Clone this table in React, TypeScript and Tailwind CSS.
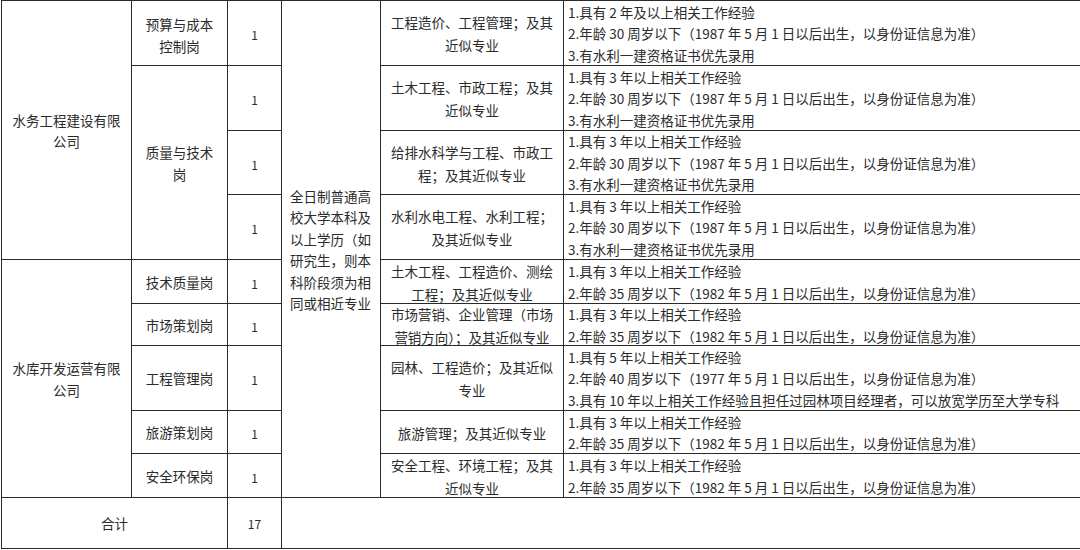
import React from "react";

const age30 = "2.年龄 30 周岁以下（1987 年 5 月 1 日以后出生，以身份证信息为准）";
const age35 = "2.年龄 35 周岁以下（1982 年 5 月 1 日以后出生，以身份证信息为准）";
const cert = "3.有水利一建资格证书优先录用";

const details = [
  {
    row: "row-start-1",
    major: ["工程造价、工程管理；及其", "近似专业"],
    reqs: ["1.具有 2 年及以上相关工作经验", age30, cert],
  },
  {
    row: "row-start-2",
    major: ["土木工程、市政工程；及其", "近似专业"],
    reqs: ["1.具有 3 年以上相关工作经验", age30, cert],
  },
  {
    row: "row-start-3",
    major: ["给排水科学与工程、市政工", "程；及其近似专业"],
    reqs: ["1.具有 3 年以上相关工作经验", age30, cert],
  },
  {
    row: "row-start-4",
    major: ["水利水电工程、水利工程；", "及其近似专业"],
    reqs: ["1.具有 3 年以上相关工作经验", age30, cert],
  },
  {
    row: "row-start-5",
    major: ["土木工程、工程造价、测绘", "工程；及其近似专业"],
    reqs: ["1.具有 3 年以上相关工作经验", age35],
  },
  {
    row: "row-start-6",
    major: ["市场营销、企业管理（市场", "营销方向）；及其近似专业"],
    reqs: ["1.具有 3 年以上相关工作经验", age35],
  },
  {
    row: "row-start-7",
    major: ["园林、工程造价；及其近似", "专业"],
    reqs: [
      "1.具有 5 年以上相关工作经验",
      "2.年龄 40 周岁以下（1977 年 5 月 1 日以后出生，以身份证信息为准）",
      "3.具有 10 年以上相关工作经验且担任过园林项目经理者，可以放宽学历至大学专科",
    ],
  },
  {
    row: "row-start-8",
    major: ["旅游管理；及其近似专业"],
    reqs: ["1.具有 3 年以上相关工作经验", age35],
  },
  {
    row: "row-start-9",
    major: ["安全工程、环境工程；及其", "近似专业"],
    reqs: ["1.具有 3 年以上相关工作经验", age35],
  },
];

// single posts in column 2 (rows 5-9)
const posts = [
  { row: "row-start-5", name: "技术质量岗" },
  { row: "row-start-6", name: "市场策划岗" },
  { row: "row-start-7", name: "工程管理岗" },
  { row: "row-start-8", name: "旅游策划岗" },
  { row: "row-start-9", name: "安全环保岗" },
];

const counts = [
  "row-start-1",
  "row-start-2",
  "row-start-3",
  "row-start-4",
  "row-start-5",
  "row-start-6",
  "row-start-7",
  "row-start-8",
  "row-start-9",
];

const cell = "border-r border-b border-[#2a2a2a] pt-[2px]";
const center = "flex flex-col items-center justify-center text-center";

const Lines = ({ lines }: { lines: string[] }) => (
  <>
    {lines.map((l, i) => (
      <span key={i} className="block whitespace-nowrap">
        {l}
      </span>
    ))}
  </>
);

const App = () => {
  return (
    <div className="w-[1080px] h-[550px] bg-white overflow-hidden">
      <div className="ml-px grid grid-cols-[130px_96px_54px_99px_183px_517px] grid-rows-[65px_65px_64px_65px_44px_42px_65px_43px_44px_51px] border-l border-t border-[#2a2a2a] text-[13.5px] leading-[21.5px] text-[#2b2b2b] font-['Noto_Sans_CJK_SC',sans-serif]">
        {/* company names */}
        <div className={`${cell} ${center} col-start-1 row-start-1 row-span-4`}>
          <Lines lines={["水务工程建设有限", "公司"]} />
        </div>
        <div className={`${cell} ${center} col-start-1 row-start-5 row-span-5`}>
          <Lines lines={["水库开发运营有限", "公司"]} />
        </div>

        {/* posts */}
        <div className={`${cell} ${center} col-start-2 row-start-1 pt-[5px]`}>
          <Lines lines={["预算与成本", "控制岗"]} />
        </div>
        <div className={`${cell} ${center} col-start-2 row-start-2 row-span-3`}>
          <Lines lines={["质量与技术", "岗"]} />
        </div>
        {posts.map((p) => (
          <div key={p.name} className={`${cell} ${center} col-start-2 ${p.row}`}>
            {p.name}
          </div>
        ))}

        {/* headcount */}
        {counts.map((r) => (
          <div key={r} className={`${cell} ${center} col-start-3 ${r} text-[12px] pt-[4px]`}>
            1
          </div>
        ))}

        {/* education */}
        <div className={`${cell} col-start-4 row-start-1 row-span-9 flex flex-col justify-center pl-2 pt-1`}>
          <Lines lines={["全日制普通高", "校大学本科及", "以上学历（如", "研究生，则本", "科阶段须为相", "同或相近专业"]} />
        </div>

        {details.map((d, i) => (
          <React.Fragment key={i}>
            <div className={`${cell} ${center} col-start-5 ${d.row} leading-[23px]`}>
              <Lines lines={d.major} />
            </div>
            <div className={`${cell} col-start-6 ${d.row} flex flex-col justify-center pl-1`}>
              <Lines lines={d.reqs} />
            </div>
          </React.Fragment>
        ))}

        {/* total */}
        <div className={`${cell} ${center} col-start-1 col-span-2 row-start-10`}>合计</div>
        <div className={`${cell} ${center} col-start-3 row-start-10 text-[12px]`}>17</div>
        <div className={`${cell} col-start-4 col-span-3 row-start-10`} />
      </div>
    </div>
  );
};

export default App;
